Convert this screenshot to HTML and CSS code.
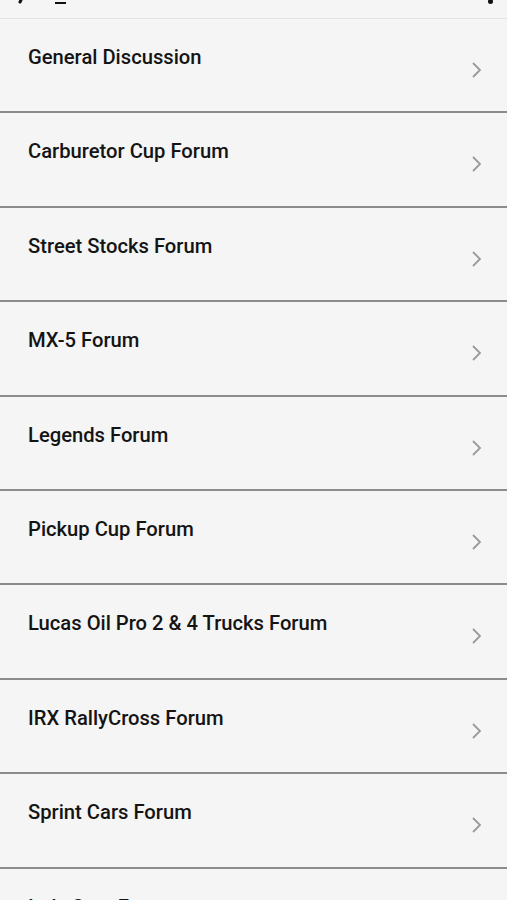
FILE: index.html
```html
<!DOCTYPE html>
<html lang="en">
<head>
    <meta charset="UTF-8">
    <title>Forums</title>
    <meta name="viewport" content="width=device-width, initial-scale=1.0">
    <link rel="stylesheet" href="styles.css">
</head>
<body>
    <div class="top-bar">
        <svg class="back-icon" width="20" height="18" viewBox="0 0 20 18">
            <path d="M11 -4 L8 2" stroke="#111" stroke-width="3" fill="none" stroke-linecap="round"/>
        </svg>
        <span class="bar-mark"></span>
        <span class="more-dot"></span>
    </div>
    <ul class="forum-list">
        <li class="forum-row"><span class="forum-name">General Discussion</span><svg class="chev" width="12" height="18" viewBox="0 0 12 18"><polyline points="2,2 9,9 2,16" fill="none" stroke="#9a9a9a" stroke-width="1.8"/></svg></li>
        <li class="forum-row"><span class="forum-name">Carburetor Cup Forum</span><svg class="chev" width="12" height="18" viewBox="0 0 12 18"><polyline points="2,2 9,9 2,16" fill="none" stroke="#9a9a9a" stroke-width="1.8"/></svg></li>
        <li class="forum-row"><span class="forum-name">Street Stocks Forum</span><svg class="chev" width="12" height="18" viewBox="0 0 12 18"><polyline points="2,2 9,9 2,16" fill="none" stroke="#9a9a9a" stroke-width="1.8"/></svg></li>
        <li class="forum-row"><span class="forum-name">MX-5 Forum</span><svg class="chev" width="12" height="18" viewBox="0 0 12 18"><polyline points="2,2 9,9 2,16" fill="none" stroke="#9a9a9a" stroke-width="1.8"/></svg></li>
        <li class="forum-row"><span class="forum-name">Legends Forum</span><svg class="chev" width="12" height="18" viewBox="0 0 12 18"><polyline points="2,2 9,9 2,16" fill="none" stroke="#9a9a9a" stroke-width="1.8"/></svg></li>
        <li class="forum-row"><span class="forum-name">Pickup Cup Forum</span><svg class="chev" width="12" height="18" viewBox="0 0 12 18"><polyline points="2,2 9,9 2,16" fill="none" stroke="#9a9a9a" stroke-width="1.8"/></svg></li>
        <li class="forum-row"><span class="forum-name">Lucas Oil Pro 2 &amp; 4 Trucks Forum</span><svg class="chev" width="12" height="18" viewBox="0 0 12 18"><polyline points="2,2 9,9 2,16" fill="none" stroke="#9a9a9a" stroke-width="1.8"/></svg></li>
        <li class="forum-row"><span class="forum-name">IRX RallyCross Forum</span><svg class="chev" width="12" height="18" viewBox="0 0 12 18"><polyline points="2,2 9,9 2,16" fill="none" stroke="#9a9a9a" stroke-width="1.8"/></svg></li>
        <li class="forum-row"><span class="forum-name">Sprint Cars Forum</span><svg class="chev" width="12" height="18" viewBox="0 0 12 18"><polyline points="2,2 9,9 2,16" fill="none" stroke="#9a9a9a" stroke-width="1.8"/></svg></li>
        <li class="forum-row"><span class="forum-name">Indy Cars Forum</span><svg class="chev" width="12" height="18" viewBox="0 0 12 18"><polyline points="2,2 9,9 2,16" fill="none" stroke="#9a9a9a" stroke-width="1.8"/></svg></li>
    </ul>
</body>
</html>
```

FILE: styles.css
```css
body {
    margin: 0;
    background: #f5f5f5;
    font-family: Roboto, 'Noto Sans', Arial, sans-serif;
    overflow: hidden;
}
.top-bar {
    height: 18px;
    border-bottom: 1px solid #e2e2e2;
    display: flex; align-items: flex-start;
    padding: 0 14px 0 12px;
    background: #f5f5f5;
}
.back-icon { display: block; }
.bar-mark {
    width: 11px; height: 2px;
    background: #111;
    margin: 2px 0 0 23px;
}
.more-dot {
    width: 5px; height: 5px;
    border-radius: 50%;
    background: #111;
    margin: 0 0 0 auto;
    transform: translateY(-1px);
}
.forum-list {
    list-style: none;
    margin: 0; padding: 0;
}
.forum-row {
    height: 92.4px;
    border-bottom: 2px solid #8c8c8c;
    display: flex; align-items: flex-start; justify-content: space-between;
    padding: 0 24px 0 28px;
}
.forum-name {
    font-size: 20.2px;
    font-weight: 500;
    color: #141414;
    line-height: 24px;
    margin-top: 26px;
}
.chev {
    margin-top: 42px;
}
```
